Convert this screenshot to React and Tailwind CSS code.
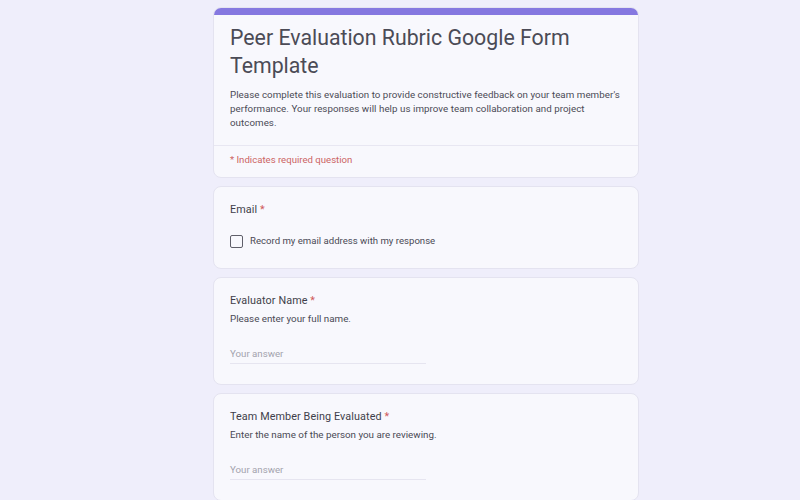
import React from "react";

const Question = ({ label, help, children }) => (
  <div className="rounded-lg border border-[#e4e3f0] bg-[#f8f8fd] px-[16px] pt-[15px] pb-[20px]">
    <div className="text-[10.8px] leading-[16px] tracking-[0.1px] text-[#3f3f4a]">
      {label} <span className="text-[#d05a5a]">*</span>
    </div>
    {help && (
      <div className="mt-[3px] text-[9.8px] leading-[14px] text-[#4a4a55]">{help}</div>
    )}
    {children}
  </div>
);

const AnswerInput = () => (
  <div className="mt-[21px] w-[196px] border-b border-[#e6e5f0] pb-[2px] text-[9.7px] leading-[14px] text-[#a3a3ad]">
    Your answer
  </div>
);

const App = () => {
  return (
    <div
      className="h-[500px] overflow-hidden bg-[#efeefb]"
      style={{ fontFamily: "Roboto, 'Noto Sans', sans-serif" }}
    >
      <div className="ml-[213px] flex w-[426px] flex-col gap-[8px] pt-[7px]">
        <div className="overflow-hidden rounded-lg border border-[#e4e3f0] bg-[#f8f8fd]">
          <div className="h-[7px] bg-[#8578e0]" />
          <div className="px-[16px] pt-[9px] pb-[15px]">
            <h1 className="text-[21.3px] leading-[28px] font-normal text-[#4b4b56]">
              Peer Evaluation Rubric Google Form Template
            </h1>
            <p className="mt-[8px] mr-[-10px] text-[9.75px] leading-[14px] tracking-[0.05px] text-[#4a4a55]">
              Please complete this evaluation to provide constructive feedback on your team member's
              performance. Your responses will help us improve team collaboration and project
              outcomes.
            </p>
          </div>
          <div className="border-t border-[#e8e7f2] px-[16px] pt-[7px] pb-[11px] text-[9.6px] leading-[13px] text-[#cc6464]">
            * Indicates required question
          </div>
        </div>

        <Question label="Email">
          <label className="mt-[16px] flex items-center gap-[7px] text-[9.6px] leading-[14px] text-[#4a4a55]">
            <span className="h-[13px] w-[13px] rounded-[2px] border-[1.5px] border-[#5f5f6a]" />
            Record my email address with my response
          </label>
        </Question>

        <Question label="Evaluator Name" help="Please enter your full name.">
          <AnswerInput />
        </Question>

        <Question label="Team Member Being Evaluated" help="Enter the name of the person you are reviewing.">
          <AnswerInput />
        </Question>
      </div>
    </div>
  );
};

export default App;
